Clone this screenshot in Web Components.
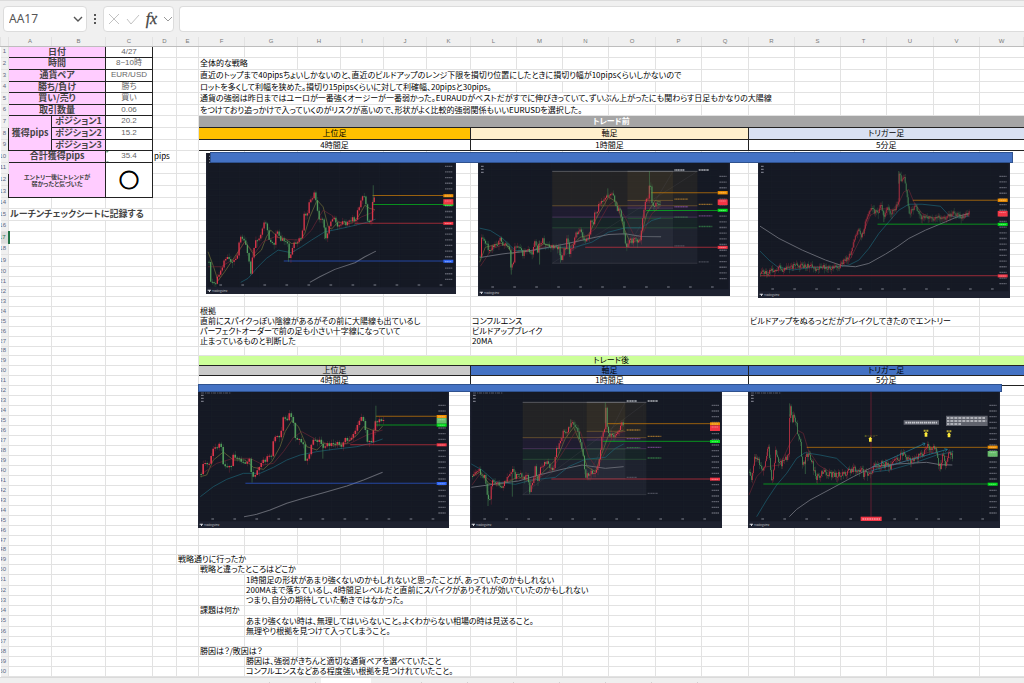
<!DOCTYPE html>
<html lang="ja">
<head>
<meta charset="utf-8">
<title>Trade note</title>
<style>
    html, body {
        margin: 0;
        height: 100%;
        overflow: hidden;
        background: #fff;
        font-family: "Noto Sans CJK JP", "Liberation Sans", sans-serif;
    }
</style>
</head>
<body>
<trade-workbook></trade-workbook>

<script>
const COLUMNS = {
    A: 43, B: 54, C: 47, D: 24, E: 22, F: 46, G: 53, H: 43, I: 43, J: 43, K: 44,
    L: 46, M: 46, N: 46, O: 47, P: 46, Q: 47, R: 46, S: 46, T: 46, U: 47, V: 46, W: 0
};

const ROW_HEIGHTS = [
    11, 12, 12, 11, 12, 11, 12, 12, 11, 12, 11, 12, 12, 11, 12, 11, 12, 11, 12,
    ...Array(8).fill(10), 9, ...Array(19).fill(10), 9, 10, 10, 11, 10, 10, 10, 11, 10, 10, 10, 10, 10
];

// [cell, columns, rows, class, text]
const CELLS = [
    ["A1", 2, 1, "label", "日付"], ["C1", 1, 1, "value", "4/27"],
    ["A2", 2, 1, "label", "時間"], ["C2", 1, 1, "value", "8~10時"],
    ["A3", 2, 1, "label", "通貨ペア"], ["C3", 1, 1, "value", "EUR/USD"],
    ["A4", 2, 1, "label", "勝ち/負け"], ["C4", 1, 1, "value", "勝ち"],
    ["A5", 2, 1, "label", "買い/売り"], ["C5", 1, 1, "value", "買い"],
    ["A6", 2, 1, "label", "取引数量"], ["C6", 1, 1, "value", "0.06"],
    ["A7", 1, 3, "label", "獲得pips"],
    ["B7", 1, 1, "label", "ポジション1"], ["C7", 1, 1, "value", "20.2"],
    ["B8", 1, 1, "label", "ポジション2"], ["C8", 1, 1, "value", "15.2"],
    ["B9", 1, 1, "label", "ポジション3"], ["C9", 1, 1, "value", ""],
    ["A10", 2, 1, "label", "合計獲得pips"], ["C10", 1, 1, "value flagged", "35.4"],
    ["D10", 1, 1, "text", "pips"],
    ["A11", 2, 3, "label small", "エントリー後にトレンドが<br>弱かったと気づいた"],
    ["C11", 1, 3, "value mark", "○"],
    ["A15", 3, 1, "text strong", "ルーチンチェックシートに記録する"],

    ["F2", 2, 1, "text", "全体的な戦略"],
    ["F3", 11, 1, "text", "直近のトップまで40pipsちょいしかないのと、直近のビルドアップのレンジ下限を損切り位置にしたときに損切り幅が10pipsくらいしかないので"],
    ["F4", 7, 1, "text", "ロットを多くして利幅を狭めた。損切り15pipsくらいに対して利確幅、20pipsと30pips。"],
    ["F5", 13, 1, "text", "通貨の強弱は昨日まではユーロが一番強くオージーが一番弱かった。EURAUDがベストだがすでに伸びきっていて、ずいぶん上がったにも関わらす日足もかなりの大陽線"],
    ["F6", 9, 1, "text", "をつけており追っかけで入っていくのがリスクが高いので、形状がよく比較的強弱関係もいいEURUSDを選択した。"],
    ["F7", 18, 1, "band before", "トレード前"],
    ["F8", 6, 1, "band gold", "上位足"], ["L8", 6, 1, "band cream", "軸足"], ["R8", 6, 1, "band pale", "トリガー足"],
    ["F9", 6, 1, "band", "4時間足"], ["L9", 6, 1, "band", "1時間足"], ["R9", 6, 1, "band", "5分足"],

    ["F24", 1, 1, "text", "根拠"],
    ["F25", 5, 1, "text", "直前にスパイクっぽい陰線があるがその前に大陽線も出ているし"],
    ["L25", 2, 1, "text", "コンフルエンス"],
    ["R25", 5, 1, "text", "ビルドアップをぬるっとだがブレイクしてきたのでエントリー"],
    ["F26", 5, 1, "text", "パーフェクトオーダーで前の足も小さい十字線になっていて"],
    ["L26", 2, 1, "text", "ビルドアップブレイク"],
    ["F27", 3, 1, "text", "止まっているものと判断した"],
    ["L27", 1, 1, "text", "20MA"],
    ["F29", 18, 1, "band after", "トレード後"],
    ["F30", 6, 1, "band silver", "上位足"], ["L30", 6, 1, "band blue", "軸足"], ["R30", 6, 1, "band blue", "トリガー足"],
    ["F31", 6, 1, "band", "4時間足"], ["L31", 6, 1, "band", "1時間足"], ["R31", 6, 1, "band", "5分足"],

    ["E49", 3, 1, "text", "戦略通りに行ったか"],
    ["F50", 3, 1, "text", "戦略と違ったところはどこか"],
    ["G51", 7, 1, "text", "1時間足の形状があまり強くないのかもしれないと思ったことが、あっていたのかもしれない"],
    ["G52", 8, 1, "text", "200MAまで落ちているし、4時間足レベルだと直前にスパイクがありそれが効いていたのかもしれない"],
    ["G53", 4, 1, "text", "つまり、自分の期待していた動きではなかった。"],
    ["F54", 1, 1, "text", "課題は何か"],
    ["G55", 7, 1, "text", "あまり強くない時は、無理してはいらないこと。よくわからない相場の時は見送ること。"],
    ["G56", 4, 1, "text", "無理やり根拠を見つけて入ってしまうこと。"],
    ["F58", 2, 1, "text", "勝因は？/敗因は？"],
    ["G59", 5, 1, "text", "勝因は、強弱がきちんと適切な通貨ペアを選べていたこと"],
    ["G60", 5, 1, "text", "コンフルエンスなどある程度強い根拠を見つけれていたこと。"]
];

const C = {
    up: "#d9364a", down: "#4f9a5b", orange: "#f09000", red: "#f23645", lime: "#00e01a",
    soft: "#66bb6a", blue: "#2f66f5", yellow: "#74723a", wine: "#6d2635", teal: "#1c6577", gray: "#62656f"
};

// price: candle path, ma: [colour, points], level: [colour, y, from x], tag: [colour, y, height]
const CHARTS = {
    before4h: {
        box: [34, 8, 749, 424], axis: 745, step: 5, noise: 14,
        price: "41,335 45,395 60,397 66,385 80,350 90,325 100,322 112,335 125,320 133,265 143,262 152,280 158,320 166,370 172,320 180,275 195,265 200,230 207,222 215,225 218,275 225,272 235,282 243,245 258,270 275,268 278,318 284,318 295,280 310,270 320,255 325,190 338,190 342,145 352,143 358,128 364,160 368,205 376,200 385,220 389,262 400,235 405,210 415,205 425,225 440,215 455,220 470,205 480,210 485,190 500,135 510,150 515,215 528,205 532,140 540,152",
        ma: [
            [C.yellow, "40,305 55,345 70,392 90,365 110,335 130,305 150,275 165,295 180,318 200,300 215,260 228,240 250,262 270,265 290,280 310,280 330,250 345,200 367,150 385,170 400,230 410,237 430,215 450,222 470,218 490,200 510,165 525,175 540,178"],
            [C.wine, "40,350 80,350 120,325 150,275 180,310 205,275 240,260 280,268 320,270 350,240 370,205 385,180 410,195 430,215 470,220 500,200 530,188 540,180"],
            [C.teal, "138,397 160,385 190,350 215,325 250,300 290,308 320,290 350,270 390,245 430,237 470,228 510,218 542,207"],
            [C.gray, "345,397 375,380 420,358 480,338 510,320 543,303"]
        ],
        wicks: [[535, 105, 160], [281, 300, 335], [389, 230, 267]],
        levels: [[C.orange, 136, 533], [C.lime, 163, 532], [C.red, 219, 480], [C.blue, 333, 267]],
        tags: [[C.orange, 132, 9], [C.lime, 160, 7], [C.red, 147, 16], [C.red, 215, 9], [C.blue, 329, 9]]
    },
    before1h: {
        box: [38, 38, 757, 398], axis: 758, step: 4, noise: 16,
        price: "43,318 47,262 58,270 68,300 80,290 95,275 103,262 112,285 125,282 131,290 135,348 142,345 147,295 160,290 170,310 185,300 200,305 208,275 215,300 222,275 230,268 240,280 255,290 270,288 280,290 285,330 292,310 300,285 305,250 310,305 320,290 328,250 345,240 355,265 368,268 375,215 382,222 388,185 395,180 405,150 415,152 428,128 445,138 452,175 460,180 470,200 475,245 480,285 495,270 515,270 524,265 532,185 540,155 548,150 553,80 558,155 565,165 575,162 585,155",
        ma: [
            [C.yellow, "43,335 60,290 80,285 105,278 125,285 140,310 165,300 200,303 235,280 280,290 310,295 345,260 370,255 395,200 430,140 455,155 475,230 495,275 525,268 545,190 570,150 588,155"],
            [C.wine, "45,347 80,295 120,280 150,305 200,300 250,285 300,295 350,265 390,235 430,165 450,150 480,200 510,262 535,245 560,190 588,165"],
            [C.teal, "43,233 75,240 110,262 150,300 200,300 260,290 330,290 380,275 430,245 480,232 530,232 560,210 588,202"],
            [C.gray, "45,321 110,310 180,303 250,290 310,278 370,265 430,252 480,250 530,258 588,259"]
        ],
        wicks: [[138, 300, 372], [223, 270, 342], [553, 62, 130], [286, 310, 336], [428, 114, 140]],
        fibs: [[261, 697, [63, 166, 200, 232, 338]], [487, 624, [63, 150, 173, 204, 290]]],
        levels: [[C.orange, 127, 558], [C.lime, 180, 543], [C.red, 290, 360]],
        tags: [[C.orange, 122, 10], [C.red, 147, 17], [C.lime, 175, 9], [C.red, 286, 9]]
    },
    before5m: {
        box: [37, 38, 757, 406], axis: 757, step: 3, noise: 14,
        price: "43,370 50,360 62,372 75,358 90,360 100,350 110,360 125,355 150,345 175,348 195,345 208,360 220,350 245,352 270,350 280,348 290,335 302,325 312,315 325,270 335,235 345,258 355,240 360,205 375,170 380,180 395,190 405,155 415,205 425,170 435,190 450,170 457,160 460,70 467,95 475,85 482,130 490,185 500,180 510,165 525,205 545,200 560,205 575,202 595,208 610,195 625,190 642,200 655,198 670,187",
        ma: [
            [C.wine, "43,372 120,357 200,350 280,350 315,325 345,265 375,195 410,175 450,180 475,125 490,118 505,155 530,190 560,203 610,200 670,192"],
            [C.teal, "43,303 70,330 95,350 140,360 200,352 260,352 310,345 340,330 370,295 400,250 430,215 460,180 490,162 530,162 585,168 610,195 640,203 670,198"],
            [C.gray, "43,228 100,265 170,300 240,330 290,347 330,350 370,340 420,312 455,290 490,265 540,240 600,215 640,198 670,190"]
        ],
        wicks: [[460, 62, 100], [415, 180, 216]],
        levels: [[C.orange, 150, 502], [C.lime, 222, 396], [C.red, 377, 43]],
        tags: [[C.orange, 145, 10], [C.red, 182, 17], [C.lime, 218, 9], [C.red, 373, 9]]
    },
    after4h: {
        box: [24, 36, 752, 408], axis: 739, step: 6, noise: 14, title: true,
        price: "31,282 38,248 50,250 60,240 65,205 85,195 93,200 95,255 110,255 122,258 127,222 140,238 160,245 178,240 183,298 190,295 205,262 215,245 235,230 245,232 248,168 270,165 275,118 290,115 298,100 308,125 312,180 322,170 330,185 340,200 343,240 358,225 362,180 385,180 395,200 410,195 430,185 450,195 460,175 480,180 490,155 508,108 522,135 528,190 545,180 550,118 562,125 577,118",
        ma: [
            [C.yellow, "31,290 50,285 70,240 100,216 130,240 165,240 190,262 220,268 245,245 270,200 285,155 305,122 325,140 350,200 380,210 400,190 430,195 470,190 500,165 520,140 545,150 565,152 577,138"],
            [C.wine, "31,285 80,250 130,235 180,235 220,255 250,250 280,215 310,172 335,155 380,180 430,198 480,190 530,165 577,150"],
            [C.teal, "31,350 70,320 110,298 160,280 210,280 250,262 290,240 330,225 380,215 430,208 500,200 540,190 577,177"],
            [C.gray, "162,410 200,403 240,390 290,370 340,355 400,338 470,318 520,300 577,277"]
        ],
        wicks: [[557, 77, 130], [398, 190, 236], [186, 280, 308]],
        levels: [[C.orange, 109, 557], [C.lime, 135, 555], [C.red, 194, 480], [C.blue, 310, 166]],
        tags: [[C.orange, 105, 9], [C.soft, 114, 17], [C.lime, 131, 9], [C.red, 190, 9], [C.blue, 306, 9]]
    },
    after1h: {
        box: [14, 36, 756, 408], axis: 734, step: 4, noise: 16, title: true,
        price: "20,288 37,265 45,285 58,290 65,355 72,350 78,300 92,310 110,318 130,290 140,270 148,290 160,285 185,292 193,335 200,305 210,255 214,310 225,260 245,245 262,275 270,215 280,190 292,155 305,150 316,130 335,140 340,180 350,205 353,245 358,290 370,280 393,275 400,240 408,165 418,150 420,85 426,160 440,170 455,155 467,130 475,150",
        ma: [
            [C.yellow, "20,290 45,275 70,310 95,315 130,305 160,290 195,305 220,290 250,260 275,235 300,175 325,142 345,190 365,260 390,275 410,220 430,165 475,150"],
            [C.wine, "20,315 45,280 90,312 150,295 210,300 260,268 300,205 330,155 345,155 370,230 395,265 420,215 445,165 475,155"],
            [C.teal, "18,252 50,270 90,305 150,313 200,300 270,292 310,260 360,238 420,232 450,205 475,192"],
            [C.gray, "18,322 90,312 160,303 220,285 290,268 350,255 420,265 475,260"]
        ],
        wicks: [[68, 310, 378], [141, 280, 350], [420, 67, 130], [193, 320, 342], [316, 118, 140]],
        fibs: [[172, 543, [67, 173, 206, 238, 344]], [364, 480, [67, 154, 180, 207, 296]]],
        levels: [[C.orange, 131, 425], [C.lime, 184, 412], [C.red, 297, 258]],
        tags: [[C.orange, 127, 9], [C.red, 136, 17], [C.lime, 180, 9], [C.red, 293, 9]]
    },
    after5m: {
        box: [24, 276, 756, 408], axis: 743, step: 3, noise: 22, title: true,
        price: "27,515 33,540 40,480 50,470 60,500 72,500 80,450 85,445 92,530 97,535 105,460 115,490 125,490 138,475 145,450 148,315 155,360 163,345 170,390 180,430 185,490 190,495 198,460 207,465 215,490 228,530 245,515 265,520 285,525 305,525 325,512 340,508 360,508 372,525 390,512 410,495 430,492 450,505 465,480 485,462 500,470 512,488 530,470 550,455 562,440 575,455 585,440 592,490 600,500 608,465 617,500 628,450 636,470",
        ma: [
            [C.wine, "27,585 50,530 80,500 120,495 150,430 175,392 190,400 205,450 235,495 280,522 340,515 400,505 460,495 520,475 570,455 636,475"],
            [C.teal, "50,650 80,600 110,555 140,520 170,475 195,458 240,465 290,475 325,508 390,517 450,510 520,490 590,465 640,455"],
            [C.gray, "148,650 170,628 210,600 270,568 340,530 400,500 470,492 560,487 600,494 637,495"]
        ],
        wicks: [[149, 310, 350], [196, 480, 522]],
        levels: [[C.orange, 442, 200], [C.lime, 552, 70]],
        tags: [[C.orange, 437, 9], [C.soft, 453, 17], [C.lime, 548, 9]],
        extra: `
            <path d="M393 276V650" stroke="#842338" stroke-width="2"/>
            <path d="M362 650h63v13h-63z" fill="#f23645"/>
            <path d="M367 657h53" stroke="#ffc4ca" stroke-width="3" stroke-dasharray="5 2"/>
            <path d="M395 502L555 430M547 429l8 1-4 8M395 512L622 448M613 446l9 2-6 7" stroke="#2387a0" stroke-width="2" fill="none"/>
            <path d="M491 361h106v13H491zM618 347h125v31H618z" fill="#60636d"/>
            <path d="M496 368h96M621 354h116M621 363h118M621 372h42" stroke="#c8cad0" stroke-width="5" stroke-dasharray="6 2 3 1"/>
            <g fill="#ffeb3b">
                <path d="M391 410l6 7h-2v8h-8v-8h-2zM558 395l6 7h-2v8h-8v-8h-2zM627 397l6 7h-2v8h-8v-8h-2z"/>
            </g>
            <path d="M551 392h14M620 394h14" stroke="#b9a92d" stroke-width="6" stroke-dasharray="6 2"/>
            <text x="373" y="410" font-size="8" fill="#b9a92d">エントリー</text>`
    }
};

class FormulaBar extends HTMLElement {
    constructor() {
        super();
        this.attachShadow({ mode: "open" });
        this.render();
    }

    render() {
        this.shadowRoot.innerHTML = `
            <style>
                :host {
                    display: flex;
                    align-items: center;
                    gap: 5px;
                    box-sizing: border-box;
                    height: 37px;
                    padding: 0 0 1px 3px;
                    background: #f0f0f0;
                    border-top: 1px solid #dcdcdc;
                    color: #444;
                }
                .box {
                    display: flex;
                    align-items: center;
                    box-sizing: border-box;
                    height: 26px;
                    border: 1px solid #dcdcdc;
                    border-radius: 4px;
                    background: #fff;
                }
                .name { width: 84px; }
                .tools { width: 71px; justify-content: space-between; padding: 0 1px 0 4px; }
                .entry { flex: 1; border-right: 0; border-radius: 4px 0 0 4px; }
                input {
                    flex: 1;
                    min-width: 0;
                    padding: 0 5px;
                    border: 0;
                    background: none;
                    outline: 0;
                    color: #555;
                    font: 12px/16px "Noto Sans", sans-serif;
                }
                button { display: flex; padding: 0; border: 0; background: none; }
                .name button { margin-right: 3px; }
                svg { display: block; fill: none; stroke: #555; }
                .off svg { stroke: #c2c2c2; }
                .chevron svg { stroke: #999; }
                .fx {
                    color: #444;
                    font: italic 16px/18px "Liberation Serif", serif;
                    -webkit-text-stroke: 0.3px #444;
                }
                .dots { margin: 0 1px; }
                .dots svg { fill: #555; stroke: none; }
            </style>
            <div class="box name">
                <input aria-label="Name box" value="AA17">
                <button aria-label="Open names"><svg width="10" height="10"><path d="M1 3l4 4 4-4" stroke-width="1.4"/></svg></button>
            </div>
            <span class="dots"><svg width="4" height="12"><path d="M1 1h2v2H1zM1 5h2v2H1zM1 9h2v2H1z"/></svg></span>
            <div class="box tools">
                <button class="off" aria-label="Cancel"><svg width="12" height="12"><path d="M1 1l10 10M11 1L1 11"/></svg></button>
                <button class="off" aria-label="Enter"><svg width="14" height="12"><path d="M1 6l4 5 8-9"/></svg></button>
                <button class="fx" aria-label="Insert function">fx</button>
                <button class="chevron" aria-label="More functions"><svg width="9" height="10"><path d="M1 3l4 4 4-4"/></svg></button>
            </div>
            <div class="box entry"><input aria-label="Formula"></div>
        `;
    }
}

class SheetGrid extends HTMLElement {
    constructor() {
        super();
        this.attachShadow({ mode: "open" });
        this.render();
    }

    rows() {
        const names = Object.keys(COLUMNS);
        const cells = new Map(CELLS.map(cell => [cell[0], cell]));
        const covered = new Set();
        return ROW_HEIGHTS.map((height, index) => {
            const row = index + 1;
            const tds = names.map((name, col) => {
                if (covered.has(name + row)) return "";
                const cell = cells.get(name + row);
                if (!cell) return "<td></td>";
                const [, cols, span, type, text] = cell;
                for (let r = 0; r < span; r++) {
                    for (let c = 0; c < cols; c++) covered.add(names[col + c] + (row + r));
                }
                return `<td class="${type}" colspan="${cols}" rowspan="${span}">${text}</td>`;
            });
            return `<tr class="h${height}"><th scope="row" class="${row === 17 ? "current" : ""}">${row}</th>${tds.join("")}</tr>`;
        }).join("");
    }

    render() {
        const names = Object.keys(COLUMNS);
        this.shadowRoot.innerHTML = `
            <style>
                :host { display: block; position: relative; }
                table {
                    width: 100%;
                    table-layout: fixed;
                    border-collapse: collapse;
                    font-size: 8px;
                    line-height: 8px;
                    font-feature-settings: "palt";
                    color: #000;
                }
                td, th { padding: 0; border: 1px solid #e2e2e2; white-space: nowrap; }
                th {
                    background: #f0f0f0;
                    color: #777;
                    font: 6px/7px "Liberation Sans", sans-serif;
                }
                thead tr { height: 9px; }
                thead th { border-bottom-color: #bdbdbd; border-top: 0; }
                tbody th {
                    padding-right: 2px;
                    border-left: 0;
                    color: #5c6680;
                    text-align: right;
                    direction: rtl;
                    overflow: hidden;
                }
                th.current { background: #dcdcdc; border-right: 2px solid #217346; color: #217346; }
                .h9 { height: 9px; }
                .h10 { height: 10px; }
                .h11 { height: 11px; }
                .h12 { height: 12px; }
                .text { padding-left: 1px; }
                .strong { font-size: 9px; font-weight: 700; color: #444; }
                .label, .value, .band { border: 1px solid #222; text-align: center; }
                .label { background: #ffccff; color: #444; font-size: 9px; font-weight: 700; }
                .small { font-size: 6px; line-height: 7px; }
                .value { color: #666; font-family: "Liberation Sans", "Noto Sans CJK JP", sans-serif; }
                .flagged { background: linear-gradient(135deg, #217346 2px, transparent 2px); }
                .mark { color: #000; font: 700 20px/24px "Noto Sans CJK JP", sans-serif; -webkit-text-stroke: 1px #000; }
                .before { background: #a5a5a5; color: #fff; font-weight: 700; }
                .gold { background: #ffc000; }
                .cream { background: #fff0cc; }
                .pale { background: #d9e1f2; }
                .after { background: #ccff99; }
                .silver { background: #c9c9c9; }
                .blue { background: #4472c4; }
                td:last-child { border-right: 0; }
            </style>
            <table>
                <colgroup>
                    <col style="width: 8px">
                    ${names.map(name => `<col${COLUMNS[name] ? ` style="width: ${COLUMNS[name]}px"` : ""}>`).join("")}
                </colgroup>
                <thead><tr><th></th>${names.map(name => `<th scope="col">${name}</th>`).join("")}</tr></thead>
                <tbody>${this.rows()}</tbody>
            </table>
            <slot></slot>
        `;
    }
}

class TradeChart extends HTMLElement {
    constructor() {
        super();
        this.attachShadow({ mode: "open" });
    }

    connectedCallback() {
        this.render(CHARTS[this.getAttribute("name")]);
    }

    // Walks along the price path and draws one candle per step
    candles({ price, step, noise }) {
        const points = price.split(" ").map(pair => pair.split(",").map(Number));
        const paths = { up: "", down: "", upWick: "", downWick: "" };
        let seed = 7;
        let open = points[0][1];
        let i = 0;
        for (let x = points[0][0]; x <= points[points.length - 1][0]; x += step) {
            while (i < points.length - 2 && points[i + 1][0] < x) i++;
            const [x1, y1] = points[i];
            const [x2, y2] = points[i + 1];
            seed = (seed * 73 + 41) % 997;
            const drift = (seed / 997 - 0.5) * noise;
            const close = Math.round(y1 + (y2 - y1) * (x - x1) / (x2 - x1) + drift);
            const side = close < open ? "up" : "down";
            const top = Math.min(open, close);
            const size = Math.max(3, Math.abs(close - open));
            paths[side] += `M${x} ${top}h${step - 1}v${size}h${1 - step}z`;
            paths[side + "Wick"] += `M${x + step / 2} ${top - 3 - seed % 9}v${size + 8 + seed % 13}`;
            open = close;
        }
        return `
            <path d="${paths.upWick}" stroke="${C.up}" opacity=".7"/>
            <path d="${paths.downWick}" stroke="${C.down}" opacity=".7"/>
            <path d="${paths.up}" fill="${C.up}"/>
            <path d="${paths.down}" fill="${C.down}"/>`;
    }

    fib([x1, x2, ys]) {
        const lines = ["#72747c", "#80602f", "#5b3d69", "#2a5938", "#3c3f49"];
        const fills = ["#a67c2e", "#7b3fa0", "#2e8b45", "#777a88"];
        const labels = ["#d0d2d8", "#b07c2c", "#7d4c91", "#347d46", "#555864"];
        return fills.map((fill, i) => `<path d="M${x1} ${ys[i]}H${x2}V${ys[i + 1]}H${x1}z" fill="${fill}" opacity=".1"/>`).join("")
            + lines.map((line, i) => `
                <path d="M${x1} ${ys[i]}H${x2}" stroke="${line}" stroke-width="2"/>
                <path d="M${x2 + 4} ${ys[i] - 4}h${i % 4 ? 41 : 31}" stroke="${labels[i]}" stroke-width="4" stroke-dasharray="4 1" opacity=".8"/>`).join("")
            + `<path d="M${x1} ${ys[4]}L${x2} ${ys[0]}" stroke="#51535c" opacity=".7"/>`;
    }

    render(chart) {
        const [left, top, width, height] = chart.box;
        const bottom = top + height;
        const right = left + width;
        let grid = "";
        for (let x = left + 40; x < chart.axis; x += 60) grid += `M${x} ${top}V${bottom - 20}`;
        for (let y = top + 20; y < bottom - 30; y += 18) grid += `M${left} ${y}H${chart.axis}`;
        let scale = "";
        for (let y = top + 40; y < bottom - 40; y += 17) scale += `M${chart.axis + 5} ${y}h22`;
        let times = "";
        for (let x = left + 40; x < chart.axis; x += 66) times += `M${x} ${bottom - 27}h8`;

        this.shadowRoot.innerHTML = `
            <style>
                :host { display: block; }
                svg { display: block; width: 100%; height: 100%; fill: none; }
                text { font-family: "Noto Sans CJK JP", sans-serif; }
            </style>
            <svg viewBox="${chart.box.join(" ")}" preserveAspectRatio="none" role="img">
                <path d="M${left} ${top}h${width}v${height}h${-width}z" fill="#1e2230"/>
                <path d="M${left + 4} ${top}H${right - 4}V${bottom - 20}H${left + 4}z" fill="#151924"/>
                <path d="${grid}" stroke="#1b202c"/>
                <path d="${scale}" stroke="#737682" stroke-width="4" stroke-dasharray="5 1" opacity=".75"/>
                <path d="${times}" stroke="#737682" stroke-width="4" opacity=".75"/>
                <path d="M${left + 9} ${top + 10}h8m-8 9h8m-8 9h8" stroke="#737682" stroke-width="4"/>
                ${chart.title ? `<path d="M${left + 9} ${top + 3}h88" stroke="#555864" stroke-width="3" stroke-dasharray="9 3 4 2"/>` : ""}
                ${(chart.fibs || []).map(this.fib).join("")}
                ${chart.ma.map(([color, points]) => `<polyline points="${points}" stroke="${color}" stroke-width="${color === C.gray ? 3 : 2}" stroke-linejoin="round"/>`).join("")}
                ${chart.levels.map(([color, y, x]) => `<path d="M${x} ${y}H${chart.axis}" stroke="${color}" stroke-width="3" opacity=".6"/>`).join("")}
                ${this.candles(chart)}
                ${chart.wicks.map(([x, y1, y2]) => `<path d="M${x} ${y1}V${y2}" stroke="${C.down}" stroke-width="2" opacity=".7"/>`).join("")}
                ${chart.extra || ""}
                ${chart.tags.map(([color, y, h]) => `
                    <path d="M${chart.axis} ${y}h30v${h}h-30z" fill="${color}"/>
                    <path d="M${chart.axis + 5} ${y + 5}h20" stroke="#fff" stroke-width="3" stroke-dasharray="4 1" opacity=".35"/>`).join("")}
                <path d="M${left + 5} ${bottom - 13}h10v3h-3v4h-3v-4h-4z" fill="#d5d7dd"/>
                <text x="${left + 18}" y="${bottom - 6}" font-size="8" fill="#c4c6cd">TradingView</text>
            </svg>
        `;
    }
}

class SheetTabs extends HTMLElement {
    constructor() {
        super();
        this.attachShadow({ mode: "open" });
        this.shadowRoot.innerHTML = `
            <style>
                :host {
                    display: flex;
                    height: 24px;
                    padding-left: 224px;
                    background: #efefef;
                    border-top: 1px solid #dadada;
                }
                button {
                    width: 46px;
                    margin: 4px 0;
                    padding: 0;
                    border: 0;
                    border-right: 1px solid #d0d0d0;
                    background: none;
                }
                button[aria-selected="true"] { width: 50px; margin: 0 5px; border: 0; border-radius: 0 0 4px 4px; background: #fff; }
            </style>
            <button aria-label="Sheet 1"></button>
            <button aria-label="Sheet 2"></button>
            <button aria-label="Sheet 3" aria-selected="true"></button>
            ${[4, 5, 6, 7, 8, 9, 10].map(n => `<button aria-label="Sheet ${n}"></button>`).join("")}
        `;
    }
}

class TradeWorkbook extends HTMLElement {
    constructor() {
        super();
        this.attachShadow({ mode: "open" });
        this.render();
    }

    render() {
        this.shadowRoot.innerHTML = `
            <style>
                :host { display: flex; flex-direction: column; }
                /* pictures and shapes float over the cells, like in any spreadsheet */
                trade-chart, .bar { position: absolute; }
                .bar { box-sizing: border-box; background: #4472c4; border: 1px solid #2f528f; }
                .b4h { left: 206px; top: 116px; width: 250px; height: 141px; }
                .b1h { left: 478px; top: 126px; width: 252px; height: 133px; }
                .b5m { left: 758px; top: 126px; width: 252px; height: 135px; }
                .a4h { left: 198px; top: 355px; width: 251px; height: 136px; }
                .a1h { left: 470px; top: 355px; width: 252px; height: 136px; }
                .a5m { left: 748px; top: 355px; width: 252px; height: 136px; }
                .upper { left: 210px; top: 115px; width: 803px; height: 11px; }
                .lower { left: 198px; top: 347px; width: 804px; height: 8px; }
            </style>
            <formula-bar></formula-bar>
            <sheet-grid>
                <trade-chart class="b4h" name="before4h"></trade-chart>
                <trade-chart class="b1h" name="before1h"></trade-chart>
                <trade-chart class="b5m" name="before5m"></trade-chart>
                <div class="bar upper"></div>
                <trade-chart class="a4h" name="after4h"></trade-chart>
                <trade-chart class="a1h" name="after1h"></trade-chart>
                <trade-chart class="a5m" name="after5m"></trade-chart>
                <div class="bar lower"></div>
            </sheet-grid>
            <sheet-tabs></sheet-tabs>
        `;
    }
}

customElements.define("formula-bar", FormulaBar);
customElements.define("sheet-grid", SheetGrid);
customElements.define("trade-chart", TradeChart);
customElements.define("sheet-tabs", SheetTabs);
customElements.define("trade-workbook", TradeWorkbook);
</script>
</body>
</html>
